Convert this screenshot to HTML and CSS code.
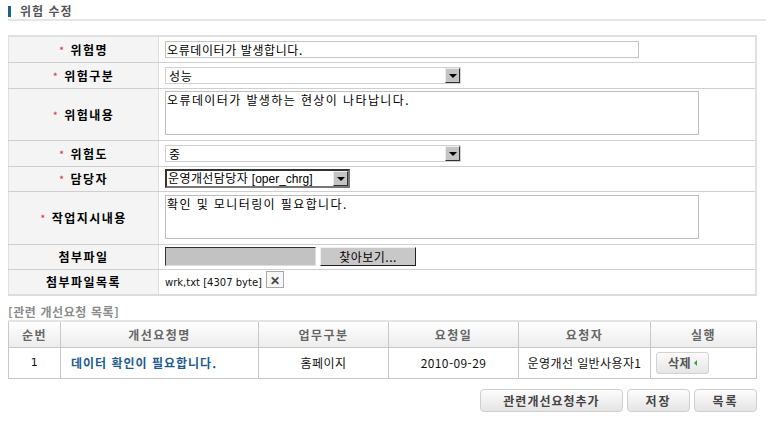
FILE: index.html
```html
<!DOCTYPE html>
<html lang="ko">
<head>
<meta charset="utf-8">
<title>위험 수정</title>
<link rel="stylesheet" href="styles.css">
</head>
<body>
<div class="page">
  <h1 class="title">위험 수정</h1>

  <table class="form">
    <colgroup><col class="c-label"><col></colgroup>
    <tr class="h26">
      <th><span class="req">*</span> 위험명</th>
      <td><div class="field input">오류데이터가 발생합니다.</div></td>
    </tr>
    <tr class="h26">
      <th><span class="req">*</span> 위험구분</th>
      <td><div class="field select wide"><span class="val">성능</span><span class="arrow"></span></div></td>
    </tr>
    <tr class="h52">
      <th><span class="req">*</span> 위험내용</th>
      <td><div class="field area">오류데이터가 발생하는 현상이 나타납니다.</div></td>
    </tr>
    <tr class="h26">
      <th><span class="req">*</span> 위험도</th>
      <td><div class="field select wide"><span class="val">중</span><span class="arrow"></span></div></td>
    </tr>
    <tr class="h25">
      <th><span class="req">*</span> 담당자</th>
      <td><div class="field select dark"><span class="val">운영개선담당자 <span class="latin">[oper_chrg]</span></span><span class="arrow"></span></div></td>
    </tr>
    <tr class="h53">
      <th><span class="req">*</span> 작업지시내용</th>
      <td><div class="field area">확인 및 모니터링이 필요합니다.</div></td>
    </tr>
    <tr class="h25">
      <th>첨부파일</th>
      <td><div class="file"><span class="file-box"></span><span class="file-btn">찾아보기...</span></div></td>
    </tr>
    <tr class="h26">
      <th>첨부파일목록</th>
      <td><div class="files"><span class="fname">wrk,txt [4307 byte]</span><span class="xbtn">&#x2715;</span></div></td>
    </tr>
  </table>

  <h2 class="sub">[관련 개선요청 목록]</h2>

  <table class="list">
    <colgroup>
      <col style="width:52px"><col style="width:198px"><col style="width:130px"><col style="width:130px"><col style="width:132px"><col>
    </colgroup>
    <thead>
      <tr><th>순번</th><th>개선요청명</th><th>업무구분</th><th>요청일</th><th>요청자</th><th>실행</th></tr>
    </thead>
    <tbody>
      <tr>
        <td>1</td>
        <td class="left"><a class="link">데이터 확인이 필요합니다.</a></td>
        <td>홈페이지</td>
        <td>2010-09-29</td>
        <td>운영개선 일반사용자1</td>
        <td class="left"><span class="sbtn">삭제 <span class="tri"></span></span></td>
      </tr>
    </tbody>
  </table>

  <div class="actions">
    <span class="btn b-long">관련개선요청추가</span>
    <span class="btn">저장</span>
    <span class="btn">목록</span>
  </div>
</div>
</body>
</html>
```

FILE: styles.css
```css
* { box-sizing: border-box; }
html, body { margin: 0; padding: 0; background: #fff; }
body {
  font-family: "Noto Sans CJK KR", "Noto Sans", sans-serif;
  font-size: 12px;
  color: #000;
}
.page { padding: 3px 16px 0 8px; }

.title {
  margin: 0 -9px 0 0;
  height: 18px;
  line-height: 16px;
  padding-left: 12px;
  font-size: 12px;
  font-weight: bold;
  color: #555;
  letter-spacing: 1px;
  border-bottom: 2px solid #e6e6e6;
  position: relative;
}
.title::before {
  content: "";
  position: absolute;
  left: 0;
  top: 3px;
  width: 3px;
  height: 11px;
  background: #1b5f8c;
}

.form {
  margin-top: 14px;
  width: 749px;
  border-collapse: collapse;
  border-top: 2px solid #e0e0e0;
  border-bottom: 2px solid #dcdcdc;
  border-right: 2px solid #e0e0e0;
  border-left: 1px solid #e0e0e0;
  table-layout: fixed;
}
.c-label { width: 150px; }
.form th, .form td {
  border-bottom: 1px solid #cfcfcf;
  padding: 0;
  vertical-align: middle;
}
.form th {
  background: #f4f4f4;
  border-right: 1px solid #dedede;
  font-weight: bold;
  text-align: center;
  font-size: 12px;
  letter-spacing: 1.5px;
}
.form td { padding-left: 6px; }
.req { color: #d23a3a; font-weight: normal; font-size: 11px; }
.h26 { height: 26px; }
.h25 { height: 25px; }
.h52 { height: 52px; }
.h53 { height: 53px; }

.field {
  font-size: 12px;
  line-height: 15px;
  color: #000;
  background: #fff;
  letter-spacing: 0.8px;
}
.input {
  width: 474px;
  height: 17px;
  border: 1px solid #c4c4c4;
  padding-left: 1px;
  letter-spacing: 0.6px;
}
.select {
  display: flex;
  align-items: center;
  height: 17px;
  border: 1px solid #d0d0d0;
}
.select.wide { width: 296px; }
.select .val { flex: 1; padding-left: 3px; white-space: nowrap; }
.select.dark {
  display: inline-flex;
  width: 185px;
  height: 19px;
  border: 2px solid #333;
  border-right-color: #777;
  border-bottom-color: #777;
  letter-spacing: 0.4px;
}
.select.dark .val { padding-left: 1px; }
.latin { font-family: "Liberation Sans", sans-serif; letter-spacing: 0; }
.arrow {
  width: 15px;
  height: 15px;
  background: #c4c4c4;
  border: 1px solid;
  border-color: #eee #333 #333 #eee;
  position: relative;
  flex: none;
}
.arrow::after {
  content: "";
  position: absolute;
  left: 3px;
  top: 5px;
  border-left: 4px solid transparent;
  border-right: 4px solid transparent;
  border-top: 4px solid #000;
}
.area {
  width: 534px;
  height: 44px;
  border: 1px solid #bdbdbd;
  padding: 0 1px;
  margin-top: -2px;
  letter-spacing: 1.4px;
}

.file { display: flex; align-items: center; gap: 4px; }
.file-box {
  width: 151px;
  height: 19px;
  background: #c2c2c2;
  border: 1px solid;
  border-color: #333 #ddd #ddd #333;
}
.file-btn {
  width: 96px;
  height: 19px;
  background: #c8c8c8;
  border: 1px solid;
  border-color: #eee #222 #222 #eee;
  text-align: center;
  font-size: 12px;
  line-height: 17px;
  letter-spacing: 0.5px;
}

.files { display: flex; align-items: center; gap: 4px; padding-top: 2px; }
.fname { font-family: "DejaVu Sans", sans-serif; font-size: 10px; color: #111; }
.xbtn {
  width: 18px;
  height: 17px;
  border: 1px solid #a8a8a8;
  background: #f6f6f6;
  color: #444;
  font-size: 12px;
  font-weight: bold;
  line-height: 15px;
  text-align: center;
  margin-top: -6px;
}

.sub {
  margin: 9px 0 0;
  font-size: 12px;
  font-weight: bold;
  color: #8c8c8c;
  line-height: 14px;
  letter-spacing: 0.6px;
}

.list {
  margin-top: 1px;
  width: 749px;
  border-collapse: collapse;
  table-layout: fixed;
  border-top: 2px solid #e4e4e4;
}
.list th, .list td {
  border: 1px solid #c8c8c8;
  text-align: center;
  padding: 0;
}
.list th {
  height: 26px;
  background: linear-gradient(#ffffff, #ececec);
  font-weight: bold;
  color: #666;
  font-size: 12px;
  letter-spacing: 1.5px;
}
.list td { height: 31px; font-size: 12px; color: #111; letter-spacing: 0.4px; }
.list td.left { text-align: left; padding-left: 10px; }
.list td:first-child { font-family: "DejaVu Sans", sans-serif; font-size: 11px; }
.link { color: #1d5b8f; font-weight: bold; letter-spacing: 1px; }
.sbtn {
  display: inline-flex;
  align-items: center;
  justify-content: center;
  gap: 3px;
  width: 53px;
  height: 22px;
  border: 1px solid #d3d3d3;
  border-radius: 3px;
  background: linear-gradient(#fbfbfb, #e6e6e6);
  color: #555;
  font-weight: bold;
  margin-left: -5px;
}
.tri {
  width: 0; height: 0;
  border-top: 3px solid transparent;
  border-bottom: 3px solid transparent;
  border-right: 3px solid #3aa03a;
}

.actions {
  display: flex;
  justify-content: flex-end;
  gap: 4px;
  margin-top: 10px;
}
.btn {
  width: 63px;
  height: 23px;
  border: 1px solid #cfcfcf;
  border-radius: 4px;
  background: linear-gradient(#fdfdfd, #e4e4e4);
  color: #444;
  font-weight: bold;
  text-align: center;
  line-height: 21px;
  letter-spacing: 2px;
}
.b-long { width: 143px; letter-spacing: 1px; }
```
